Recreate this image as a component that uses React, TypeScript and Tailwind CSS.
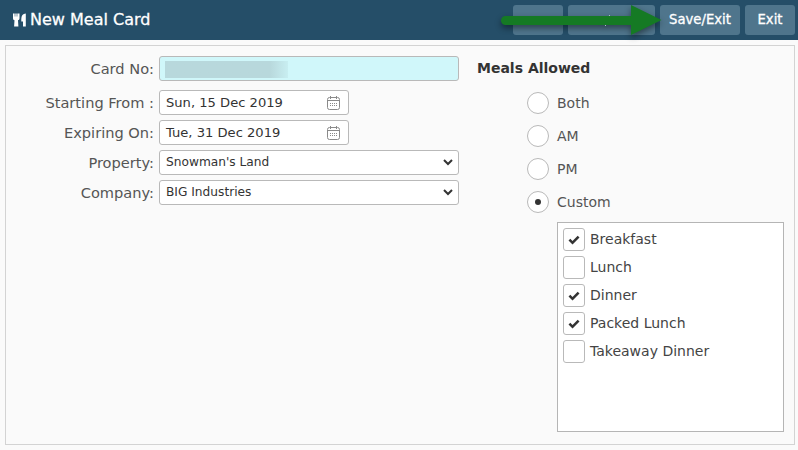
const inputBox = "flex items-center h-[25px] bg-white border border-[#b9b9b9] rounded-[3px] pl-[6px] text-[#333]";
const label = "w-[154px] text-right text-[14.6px] text-[#555]";

function Utensils() {
  return (
    <svg width="13" height="14" viewBox="0 0 13 14" fill="white">
      <path d="M0 0.500h1.700v3h.6v-3h1.400v3h.6v-3H6.500v4.700c0 1.200-.7 1.800-1.500 2.100l.4 6.200H1.100l.4-6.200C.7 7 0 6.400 0 5.200z" />
      <path d="M8.300 6C8.300 2.800 9.800.7 12.800 .5v13H10V8.500H8.300z" />
    </svg>
  );
}

function CalendarIcon() {
  return (
    <svg width="13" height="14" viewBox="0 0 13 14" fill="none" stroke="#8a8a8a" strokeWidth="1" className="mr-[8px]">
      <rect x="0.500" y="1.500" width="12" height="12" rx="2" />
      <path d="M0.500 4.500h12M3.500 0v3M9.500 0v3" />
      <path d="M3 7.500h7M3 9.500h7" stroke="#8a8a8a" strokeDasharray="1 1" />
    </svg>
  );
}

function Chevron() {
  return (
    <svg width="10" height="7" viewBox="0 0 10 7" fill="none" stroke="#333" strokeWidth="2" className="mr-[5px]">
      <path d="M1 1l4 4 4-4" />
    </svg>
  );
}

function Check() {
  return (
    <svg width="12" height="10" viewBox="0 0 12 10" fill="#333">
      <path d="M0.500 5.500L2.300 3.700 4.500 6 9.700 0.800 11.500 2.600 4.500 9.500z" />
    </svg>
  );
}

function Row({ name, children }: { name: string; children: React.ReactNode }) {
  return (
    <div className="flex items-center gap-[5px]">
      <div className={label}>{name}</div>
      {children}
    </div>
  );
}

function DateInput({ value }: { value: string }) {
  return (
    <div className={`${inputBox} w-[190px] justify-between text-[13.1px]`}>
      <span className="pt-[1px]">{value}</span>
      <CalendarIcon />
    </div>
  );
}

function SelectInput({ value }: { value: string }) {
  return (
    <div className={`${inputBox} w-[300px] justify-between text-[12.2px]`}>
      <span className="pb-[1px]">{value}</span>
      <Chevron />
    </div>
  );
}

function Radio({ name, on }: { name: string; on?: boolean }) {
  return (
    <div className="flex items-center gap-[8px] h-[22px]">
      <div className="w-[22px] h-[22px] rounded-full bg-white border border-[#b9b9b9] flex items-center justify-center">
        {on && <div className="w-[6px] h-[6px] rounded-full bg-[#333]" />}
      </div>
      <span className="text-[14px] text-[#555]">{name}</span>
    </div>
  );
}

function Tick({ name, on }: { name: string; on?: boolean }) {
  return (
    <div className="flex items-center gap-[5px] h-[23px]">
      <div className="w-[22px] h-[23px] rounded-[3px] bg-white border border-[#b9b9b9] flex items-center justify-center">
        {on && <Check />}
      </div>
      <span className="text-[14px] text-[#444]">{name}</span>
    </div>
  );
}

export default function App() {
  return (
    <div className="relative w-[798px] h-[450px] bg-[#fafafa] overflow-hidden font-['DejaVu_Sans',sans-serif]">
      <header className="h-[40px] bg-[#254e68] flex items-center justify-between pl-[13px] pr-[3px]">
        <div className="flex items-center gap-[4px] text-white text-[16px] [-webkit-text-stroke:0.3px_white]">
          <Utensils />
          <span>New Meal Card</span>
        </div>
        <div className="flex gap-[5px]">
          <div className="w-[50px] h-[30px] rounded-[3px] bg-[#4f758c]" />
          <div className="w-[87px] h-[30px] rounded-[3px] bg-[#4f758c]" />
          <div className="w-[80px] h-[30px] rounded-[3px] bg-[#4f758c] flex items-center justify-center text-white text-[13.2px] [-webkit-text-stroke:0.3px_white]">Save/Exit</div>
          <div className="w-[50px] h-[30px] rounded-[3px] bg-[#4f758c] flex items-center justify-center text-white text-[13.2px] [-webkit-text-stroke:0.3px_white]">Exit</div>
        </div>
      </header>

      <main className="mx-[5px] mt-[5px] h-[400px] w-[790px] border border-[#d3d3d3] flex">
        <div className="pt-[10px] flex flex-col w-[471px] -ml-[6px]">
          <Row name="Card No:">
            <div className="h-[25px] w-[300px] bg-[#d0f7fa] border border-[#b9b9b9] rounded-[3px] pl-[5px] pt-[4px]">
              <div className="w-[123px] h-[17px] bg-gradient-to-r from-[#b8d8dc] from-85% to-[#c8eef1]" />
            </div>
          </Row>
          <div className="mt-[9px] flex flex-col gap-[5px]">
            <Row name="Starting From :"><DateInput value="Sun, 15 Dec 2019" /></Row>
            <Row name="Expiring On:"><DateInput value="Tue, 31 Dec 2019" /></Row>
            <Row name="Property:"><SelectInput value="Snowman's Land" /></Row>
            <Row name="Company:"><SelectInput value="BIG Industries" /></Row>
          </div>
        </div>

        <div className="pt-[14px] flex flex-col">
          <div className="text-[14px] font-bold text-[#333] ml-[6px] h-[17px] leading-[17px]">Meals Allowed</div>
          <div className="ml-[56px] mt-[15px] flex flex-col gap-[11px]">
            <Radio name="Both" />
            <Radio name="AM" />
            <Radio name="PM" />
            <Radio name="Custom" on />
          </div>
          <div className="ml-[86px] mt-[9px] w-[227px] h-[210px] bg-white border border-[#b5b5b5] pl-[5px] pt-[5px] flex flex-col gap-[5px]">
            <Tick name="Breakfast" on />
            <Tick name="Lunch" />
            <Tick name="Dinner" on />
            <Tick name="Packed Lunch" on />
            <Tick name="Takeaway Dinner" />
          </div>
        </div>
      </main>

      {/* green arrow over the toolbar */}
      <svg width="180" height="44" viewBox="0 0 180 44" className="absolute left-[495px] top-0 drop-shadow-[0_3px_3px_rgba(0,0,0,0.45)]">
        <rect x="114" y="15" width="1" height="1" fill="#a9bcc8" />
        <rect x="110" y="25" width="1" height="1" fill="#a9bcc8" />
        <path d="M10.500 16h125.500V5l30.500 15L136 35V25H10.500a4.500 4.500 0 0 1 0-9z" fill="#157a24" />
      </svg>
    </div>
  );
}
